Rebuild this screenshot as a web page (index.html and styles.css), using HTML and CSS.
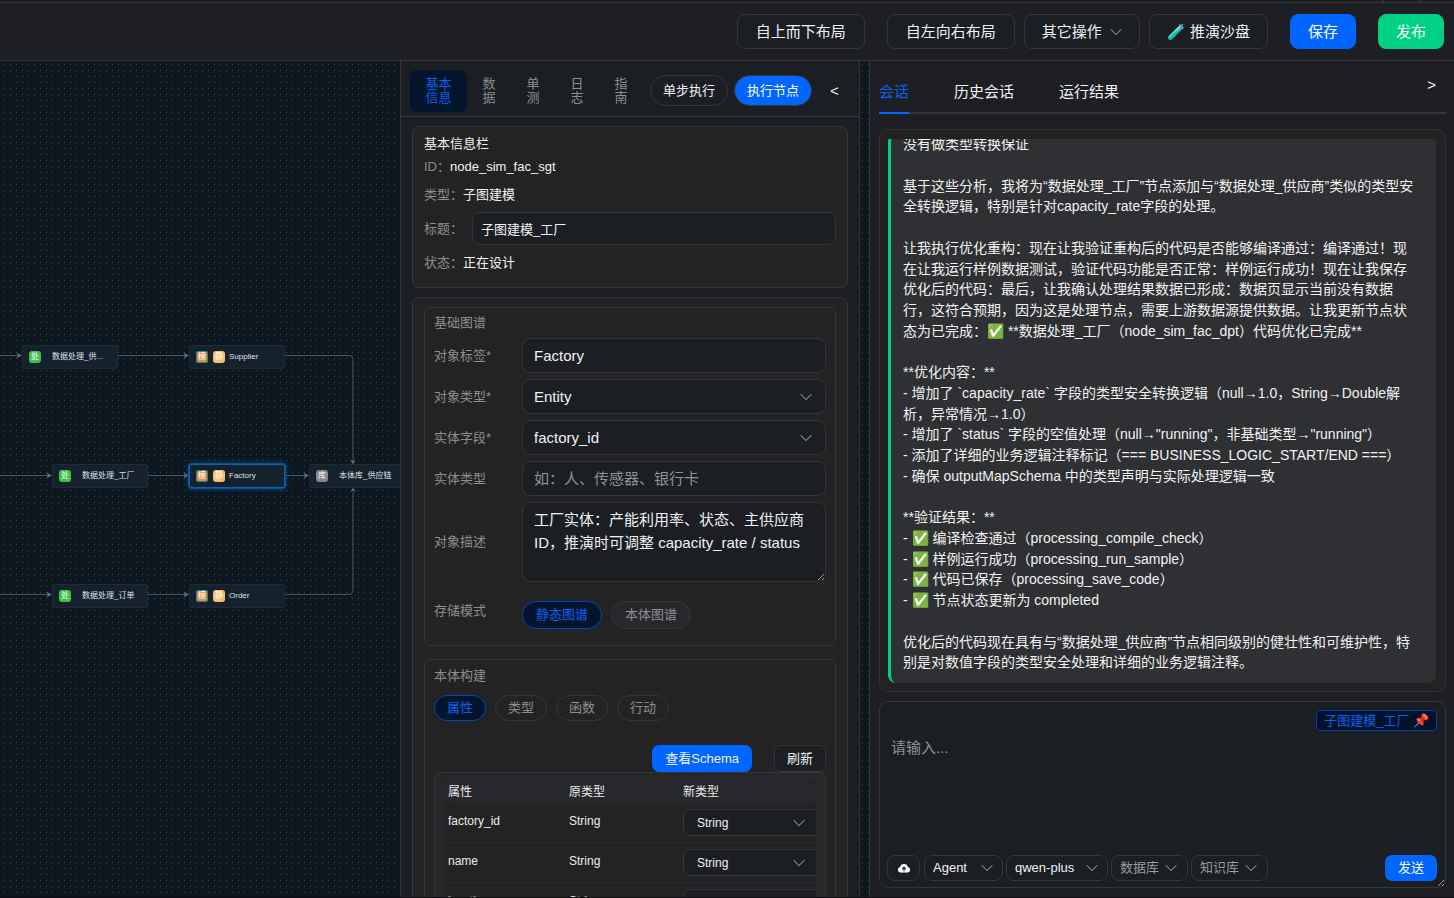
FILE: index.html
```html
<!DOCTYPE html>
<html lang="zh-CN">
<head>
<meta charset="utf-8">
<title>子图建模_工厂</title>
<link rel="stylesheet" href="styles.css">
</head>
<body>
<svg class="defs" aria-hidden="true">
  <symbol id="chevron" viewBox="0 0 12 8"><path d="M0.7 1.2 6 6.6 11.3 1.2" fill="none" stroke="currentColor" stroke-width="1"/></symbol>
</svg>
<div class="strip"><span></span></div>
<header class="topbar">
  <button class="btn roomy" type="button">自上而下布局</button>
  <button class="btn roomy apart" type="button">自左向右布局</button>
  <button class="btn" type="button">其它操作<svg class="chev"><use href="#chevron"/></svg></button>
  <button class="btn" type="button"><span>🧪 推演沙盘</span></button>
  <button class="btn primary apart" type="button">保存</button>
  <button class="btn success apart" type="button">发布</button>
</header>
<main class="workspace">
  <section class="canvas" aria-label="流程画布">
    <svg class="edges" width="400" height="836" aria-hidden="true">
      <g fill="none" stroke="#465564" stroke-width="1">
        <path d="M0 294.500H18M118 294.500H185M285 294.500H349Q353 294.500 353 298.500V399"/>
        <path d="M0 414.500H48M148 414.500H185M285 414.500H305"/>
        <path d="M0 533.500H48M148 533.500H185M285 533.500H349Q353 533.500 353 529.500V431"/>
      </g>
      <g fill="#637485">
        <path d="M22 294.500 16.500 291.800 18 294.500 16.500 297.200ZM189 294.500 183.500 291.800 185 294.500 183.500 297.200Z"/>
        <path d="M52 414.500 46.500 411.800 48 414.500 46.500 417.200ZM189 414.500 183.500 411.800 185 414.500 183.500 417.200ZM309 414.500 303.500 411.800 305 414.500 303.500 417.200Z"/>
        <path d="M52 533.500 46.500 530.800 48 533.500 46.500 536.200ZM189 533.500 183.500 530.800 185 533.500 183.500 536.200Z"/>
        <path d="M353 403.500 350.300 398.500 353 400 355.700 398.500ZM353 426.500 350.300 431 353 429.500 355.700 431Z"/>
      </g>
    </svg>
    <div class="node n1"><i class="tag green">处</i><span class="wide">数据处理_供...</span></div>
    <div class="node n2"><i class="tag teal">模</i><i class="tag sand">静</i><span>Supplier</span></div>
    <div class="node n3"><i class="tag green">处</i><span class="wide">数据处理_工厂</span></div>
    <div class="node n4 current"><i class="tag teal">模</i><i class="tag sand">静</i><span>Factory</span></div>
    <div class="node n5"><i class="tag gray">库</i><span class="wide">本体库_供应链</span></div>
    <div class="node n6"><i class="tag green">处</i><span class="wide">数据处理_订单</span></div>
    <div class="node n7"><i class="tag teal">模</i><i class="tag sand">静</i><span>Order</span></div>
  </section>

  <section class="inspector">
    <nav class="inspector-bar">
      <button class="tab on" type="button">基本信息</button>
      <button class="tab" type="button">数据</button>
      <button class="tab" type="button">单测</button>
      <button class="tab" type="button">日志</button>
      <button class="tab" type="button">指南</button>
      <button class="round first" type="button">单步执行</button>
      <button class="round primary" type="button">执行节点</button>
      <button class="fold" type="button">&lt;</button>
    </nav>
    <div class="inspector-body">
      <section class="card info">
        <h2>基本信息栏</h2>
        <p>ID：<b>node_sim_fac_sgt</b></p>
        <p>类型：<b>子图建模</b></p>
        <div class="title-row"><label for="title">标题：</label><input id="title" value="子图建模_工厂"></div>
        <p>状态：<b>正在设计</b></p>
      </section>
      <section class="card outer">
        <section class="group">
          <h3>基础图谱</h3>
          <div class="form">
            <label for="tag">对象标签*</label><input id="tag" value="Factory">
            <label for="type">对象类型*</label>
            <div class="select"><select id="type"><option>Entity</option></select><svg class="chev"><use href="#chevron"/></svg></div>
            <label for="field">实体字段*</label>
            <div class="select"><select id="field"><option>factory_id</option></select><svg class="chev"><use href="#chevron"/></svg></div>
            <label for="kind">实体类型</label><input id="kind" placeholder="如：人、传感器、银行卡">
            <label for="desc">对象描述</label><textarea id="desc">工厂实体：产能利用率、状态、主供应商ID，推演时可调整 capacity_rate / status</textarea>
          </div>
          <div class="mode">
            <span>存储模式</span>
            <div class="pills big"><button class="pill on" type="button">静态图谱</button><button class="pill" type="button">本体图谱</button></div>
          </div>
        </section>
        <section class="group build">
          <h3>本体构建</h3>
          <div class="pills"><button class="pill on" type="button">属性</button><button class="pill" type="button">类型</button><button class="pill" type="button">函数</button><button class="pill" type="button">行动</button></div>
          <div class="actions"><button class="small primary" type="button">查看Schema</button><button class="small" type="button">刷新</button></div>
          <div class="table-wrap">
            <div class="table-clip">
            <table>
              <colgroup><col class="c1"><col class="c2"><col></colgroup>
              <thead><tr><th>属性</th><th>原类型</th><th>新类型</th></tr></thead>
              <tbody>
                <tr><td>factory_id</td><td>String</td><td><div class="select mini"><select aria-label="factory_id 新类型"><option>String</option></select><svg class="chev"><use href="#chevron"/></svg></div></td></tr>
                <tr><td>name</td><td>String</td><td><div class="select mini"><select aria-label="name 新类型"><option>String</option></select><svg class="chev"><use href="#chevron"/></svg></div></td></tr>
                <tr><td>location</td><td>String</td><td><div class="select mini"><select aria-label="location 新类型"><option>String</option></select><svg class="chev"><use href="#chevron"/></svg></div></td></tr>
              </tbody>
            </table>
            </div>
          </div>
        </section>
      </section>
    </div>
  </section>

  <section class="chat">
    <div class="chat-head">
      <nav class="chat-tabs">
        <button class="on" type="button">会话</button>
        <button type="button">历史会话</button>
        <button type="button">运行结果</button>
      </nav>
      <button class="collapse" type="button">&gt;</button>
    </div>
    <div class="messages">
      <div class="scroll">
      <div class="bubble">没有做类型转换保证

基于这些分析，我将为“数据处理_工厂”节点添加与“数据处理_供应商”类似的类型安全转换逻辑，特别是针对capacity_rate字段的处理。

让我执行优化重构：现在让我验证重构后的代码是否能够编译通过：编译通过！现在让我运行样例数据测试，验证代码功能是否正常：样例运行成功！现在让我保存优化后的代码：最后，让我确认处理结果数据已形成：数据页显示当前没有数据行，这符合预期，因为这是处理节点，需要上游数据源提供数据。让我更新节点状态为已完成：✅ **数据处理_工厂（node_sim_fac_dpt）代码优化已完成**

**优化内容：**
- 增加了 `capacity_rate` 字段的类型安全转换逻辑（null→1.0，String→Double解析，异常情况→1.0）
- 增加了 `status` 字段的空值处理（null→"running"，非基础类型→"running"）
- 添加了详细的业务逻辑注释标记（=== BUSINESS_LOGIC_START/END ===）
- 确保 outputMapSchema 中的类型声明与实际处理逻辑一致

**验证结果：**
- ✅ 编译检查通过（processing_compile_check）
- ✅ 样例运行成功（processing_run_sample）
- ✅ 代码已保存（processing_save_code）
- ✅ 节点状态更新为 completed

优化后的代码现在具有与“数据处理_供应商”节点相同级别的健壮性和可维护性，特别是对数值字段的类型安全处理和详细的业务逻辑注释。</div>
      </div>
    </div>
    <form class="composer">
      <button class="context" type="button">子图建模_工厂 📌</button>
      <textarea aria-label="消息" placeholder="请输入..."></textarea>
      <div class="tools">
        <button class="upload" type="button" aria-label="上传">
          <svg width="12" height="10" viewBox="0 0 12 10"><path d="M3 9.500A2.700 2.700 0 0 1 2 4.200 4.100 4.100 0 0 1 10 4.200 2.700 2.700 0 0 1 9 9.500Z" fill="#fff"/><path d="M6 8.300V4.500M4.300 6 6 4.200 7.700 6" fill="none" stroke="#1b1e22" stroke-width="1.100"/></svg>
        </button>
        <div class="select tool agent"><select aria-label="模式"><option>Agent</option></select><svg class="chev"><use href="#chevron"/></svg></div>
        <div class="select tool model"><select aria-label="模型"><option>qwen-plus</option></select><svg class="chev"><use href="#chevron"/></svg></div>
        <button class="drop" type="button">数据库<svg class="chev"><use href="#chevron"/></svg></button>
        <button class="drop" type="button">知识库<svg class="chev"><use href="#chevron"/></svg></button>
        <button class="send" type="submit">发送</button>
      </div>
    </form>
  </section>
</main>
</body>
</html>
```
FILE: styles.css
```css
* { box-sizing: border-box; }
:root {
  color-scheme: dark;
  --line: #35363a;
  --field: #1b1e23;
  --card: #232323;
  --blue: #0066ff;
  --muted: #8b8d90;
}
html, body { height: 100%; margin: 0; }
body {
  display: flex;
  flex-direction: column;
  overflow: hidden;
  background: #1e1f24;
  border-bottom: 1px solid #101014;
  color: #f2f2f2;
  font: 13px/20px "Liberation Sans", "Noto Sans CJK SC", sans-serif;
}
button, input, select, textarea { margin: 0; font: inherit; color: inherit; }
button { padding: 0; border: 0; background: none; white-space: nowrap; }
h2, h3, p { margin: 0; font-size: 13px; font-weight: 400; line-height: 20px; }
b { font-weight: 400; color: #f2f2f2; }
.defs { display: none; }
.chev { width: 12px; height: 8px; flex: none; color: #b4b6b9; }

.strip { height: 3px; flex: none; border-bottom: 1px solid var(--line); display: flex; justify-content: flex-end; padding-right: 34px; }
.strip span { width: 37px; border: solid var(--line); border-width: 0 1px; }
.topbar {
  flex: none;
  height: 58px;
  display: flex;
  justify-content: flex-end;
  align-items: center;
  gap: 9px;
  padding-right: 10px;
  border-bottom: 1px solid var(--line);
}
.btn {
  display: flex;
  align-items: center;
  gap: 8px;
  height: 35px;
  padding: 0 17px;
  border: 1px solid var(--line);
  border-radius: 8px;
  background: var(--field);
  font-size: 15px;
}
.btn.roomy { padding: 0 18px; }
.btn.apart { margin-left: 13px; }
.primary, .btn.primary { background: var(--blue); border-color: var(--blue); color: #fff; }
.btn.success { background: #00d084; border-color: #00d084; color: #fff; }

.workspace {
  flex: 1;
  min-height: 0;
  display: grid;
  grid-template-columns: 400fr 460fr 9px 585fr;
  grid-template-rows: minmax(0, 1fr);
  background: #0c1720 radial-gradient(circle 1px at 75% 58%, #394854 0, #394854 50%, transparent 60%) 0 0 / 6px 6px;
}
.canvas { position: relative; overflow: hidden; }
.edges { display: block; }
.node {
  position: absolute;
  display: flex;
  align-items: center;
  gap: 5px;
  width: 96px;
  height: 24px;
  padding-left: 6px;
  border: 1px solid #1c2b38;
  border-radius: 2px;
  background: #15212c;
  color: #dfe3e6;
  font-size: 8px;
  line-height: 12px;
  white-space: nowrap;
}
.node span { margin-left: -1px; }
.node .wide { margin-left: 6px; }
.current { border-color: #0a63b8; border-radius: 3px; box-shadow: 0 0 0 1px #0a5096, 0 0 6px #0a5096; }
.n1 { left: 22px; top: 284px; }
.n2 { left: 189px; top: 284px; }
.n3 { left: 52px; top: 403px; }
.n4 { left: 189px; top: 403px; }
.n5 { left: 309px; top: 403px; }
.n6 { left: 52px; top: 523px; }
.n7 { left: 189px; top: 523px; }
.tag { width: 12px; height: 12px; border-radius: 3px; color: #fff; font-style: normal; text-align: center; }
.green { background: #40bf4b; }
.gray { background: #83868b; }
.sand { background: #fabb72; }
.teal { background: #e98a49; box-shadow: inset 0 0 0 1px #14947f; }

.inspector {
  display: flex;
  flex-direction: column;
  min-width: 0;
  border: solid var(--line);
  border-width: 0 1px;
  background: #1b1e22;
}
.inspector-bar {
  flex: none;
  display: flex;
  align-items: center;
  height: 56px;
  padding: 4px 9px 0;
  margin-bottom: 9px;
  border-bottom: 1px solid var(--line);
}
.tab { width: 44px; padding: 7px 15px; line-height: 14px; color: var(--muted); white-space: normal; word-break: break-all; border-radius: 8px; flex: none; }
.tab.on { width: 57px; background: #03152d; color: #0a62ee; }
.round { height: 31px; padding: 0 12px; border: 1px solid var(--line); border-radius: 16px; }
.round.first { margin: 0 6px 0 7px; }
.fold { margin-left: 18px; font-size: 15px; }
.inspector-body { flex: 1; min-height: 0; overflow: hidden; padding: 0 11px; }
.card { border: 1px solid var(--line); border-radius: 7px; background: var(--card); }
.info { padding: 7px 11px 14px; margin-bottom: 9px; color: var(--muted); }
.info h2 { margin-bottom: 3px; color: #f2f2f2; }
.info p + p { margin-top: 8px; }
.title-row { display: flex; align-items: center; gap: 9px; margin: 7px 0 8px; }
.title-row input { flex: 1; min-width: 0; height: 33px; padding: 0 8px; color: #f2f2f2; }
input, textarea, select { border: 1px solid var(--line); border-radius: 8px; background: var(--field); outline: 0; }
input::placeholder, textarea::placeholder { color: #8f9296; opacity: 1; }

.outer { padding: 9px 11px; }
.group { padding: 5px 9px 16px; margin-bottom: 13px; border: 1px solid var(--line); border-radius: 7px; color: var(--muted); }
.group.build { padding-top: 6px; }
.group h3 { margin-bottom: 5px; }
.form { display: grid; grid-template-columns: 88px minmax(0, 1fr); gap: 6px 0; align-items: center; }
.form input, .form select, .form textarea { width: 100%; height: 35px; padding: 0 11px; color: #f2f2f2; font-size: 15px; }
.form textarea { display: block; height: 80px; padding: 5px 11px; line-height: 23px; resize: vertical; overflow: hidden; }
.select { display: grid; align-items: center; }
.select > * { grid-area: 1 / 1; }
.select select { appearance: none; width: 100%; color: #f2f2f2; }
.select .chev { justify-self: end; margin-right: 14px; pointer-events: none; }
.mode { display: grid; grid-template-columns: 88px minmax(0, 1fr); margin-top: 19px; }
.pills { display: flex; gap: 9px; }
.pill { height: 26px; padding: 0 12px; border: 1px solid var(--line); border-radius: 14px; color: var(--muted); }
.big .pill { height: 28px; padding: 0 13px; background: #27282b; }
.pills .pill.on { border-color: #0049b5; background: #03152d; color: #0a62ee; }
.group .pills:not(.big) { margin-top: 9px; }
.actions { display: flex; justify-content: flex-end; gap: 22px; margin-top: 24px; }
.small { height: 27px; padding: 0 12px; border: 1px solid var(--line); border-radius: 7px; background: var(--field); color: #f2f2f2; }
.small.primary { background: var(--blue); border-color: var(--blue); }
.table-wrap { padding: 8px 9px; border: 1px solid var(--line); border-radius: 7px; background: #27282b; color: #ececec; font-size: 12px; }
.table-clip { overflow: hidden; background: var(--card); }
table { width: 100%; table-layout: fixed; border-collapse: separate; border-spacing: 0; }
.c1 { width: 121px; }
.c2 { width: 114px; }
th, td { padding: 0 4px; text-align: left; font-weight: 400; }
th { height: 22px; background: #27282d; }
th:first-child { border-radius: 8px 0 0 8px; }
th:last-child { border-radius: 0 8px 8px 0; }
td { height: 40px; padding-bottom: 3px; border-bottom: 1px solid #2b2c2e; }
td:last-child { padding-bottom: 0; }
.mini { width: 139px; }
.mini select { height: 27px; padding: 0 13px; font-size: 12px; }
.mini .chev { margin-right: 17px; }

.chat { display: flex; flex-direction: column; grid-column: 4; min-width: 0; padding: 0 8px 9px 9px; border-left: 1px solid var(--line); background: #1e1f24; }
.chat-head { flex: none; display: flex; justify-content: space-between; align-items: flex-start; height: 53px; border-bottom: 2px solid var(--line); margin-bottom: 15px; }
.chat-tabs { display: flex; gap: 45px; height: 53px; }
.chat-tabs button { height: 53px; padding-top: 10px; font-size: 15px; border-bottom: 2px solid transparent; }
.chat-tabs .on { color: #0a62ee; border-bottom-color: var(--blue); }
.collapse { margin: 14px 10px 0; font-size: 15px; }
.messages { flex: 1; min-height: 0; padding: 9px 9px 8px 8px; border: 1px solid #303135; border-radius: 9px; background: #222223; display: flex; }
.scroll { flex: 1; overflow: hidden; display: flex; flex-direction: column; justify-content: flex-end; }
.bubble { flex: none; padding: 0 21px 10px 12px; border-left: 3px solid #00d084; border-radius: 8px; background: #2f3033; font-size: 14px; line-height: 1.48; white-space: pre-wrap; }
.composer {
  flex: none;
  display: flex;
  flex-direction: column;
  height: 187px;
  margin-top: 9px;
  padding: 8px 8px 6px 7px;
  border: 1px solid var(--line);
  border-radius: 9px;
  background: var(--field);
  overflow: hidden;
  resize: vertical;
}
.context { align-self: flex-end; height: 21px; padding: 0 7px; border: 1px solid #00409c; border-radius: 4px; background: #03122b; color: #0a62ee; line-height: 18px; }
.composer textarea { flex: 1; min-height: 0; padding: 5px 4px; border: 0; background: none; font-size: 15px; line-height: 23px; resize: none; }
.tools { display: flex; gap: 3px; }
.upload, .drop, .tool select { height: 26px; border: 1px solid var(--line); border-radius: 8px; background: var(--field); }
.upload { width: 33px; margin-right: 1px; display: flex; align-items: center; justify-content: center; }
.tool select { padding: 0 8px; }
.tool .chev { margin-right: 10px; }
.agent { width: 79px; }
.model { width: 102px; }
.drop { display: flex; align-items: center; gap: 6px; padding: 0 10px 0 8px; color: #9a9c9f; }
.send { height: 26px; margin-left: auto; padding: 0 13px; border-radius: 7px; background: var(--blue); color: #fff; }
```
